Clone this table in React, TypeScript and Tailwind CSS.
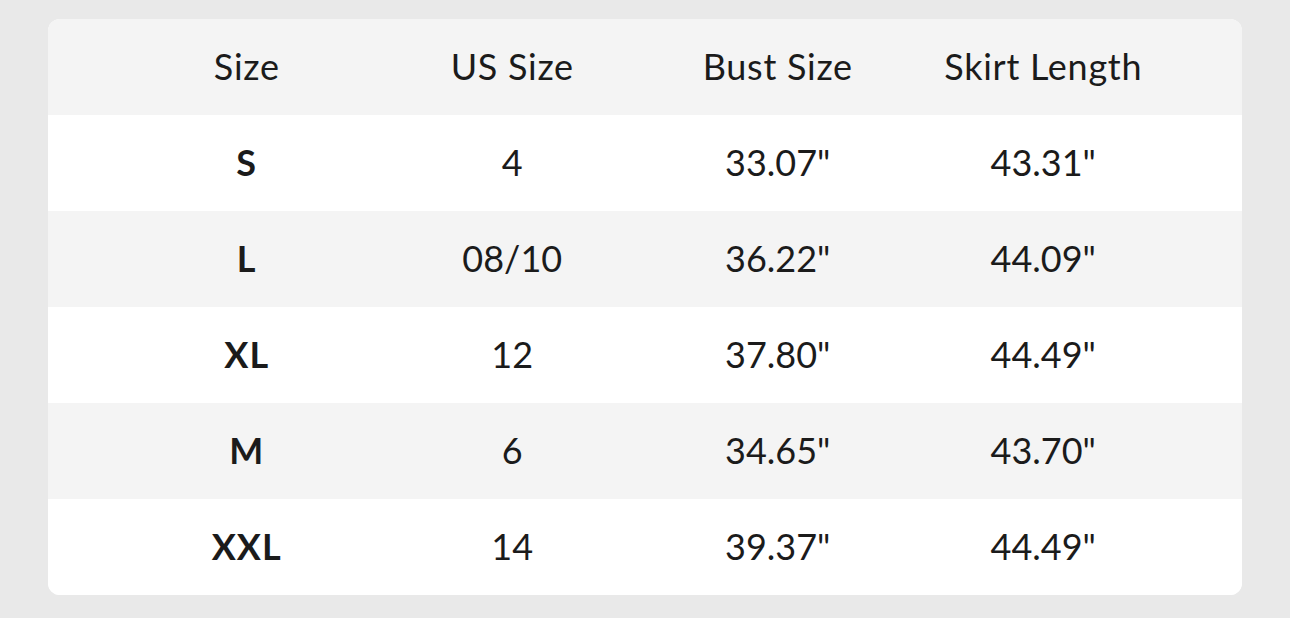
const headers = ["Size", "US Size", "Bust Size", "Skirt Length"];

const rows = [
  { size: "S", us: "4", bust: '33.07"', skirt: '43.31"' },
  { size: "L", us: "08/10", bust: '36.22"', skirt: '44.09"' },
  { size: "XL", us: "12", bust: '37.80"', skirt: '44.49"' },
  { size: "M", us: "6", bust: '34.65"', skirt: '43.70"' },
  { size: "XXL", us: "14", bust: '39.37"', skirt: '44.49"' },
];

export default function App() {
  return (
    <div className="min-h-screen bg-[#e9e9e9] pt-[19px] pl-[48px] font-['Lato',sans-serif] text-[#1b1b1b]">
      <div className="w-[1194px] overflow-hidden rounded-[12px] bg-white">
        <div className="grid h-[96px] grid-cols-4 items-center bg-[#f4f4f4] px-[66px] pb-[3px] text-[36px] tracking-[0.02em]">
          {headers.map((h) => (
            <div key={h} className="text-center">
              {h}
            </div>
          ))}
        </div>
        {rows.map((r, i) => (
          <div
            key={r.size}
            className={
              i % 2 === 1
                ? "grid h-[96px] grid-cols-4 items-center bg-[#f4f4f4] px-[66px] pb-[3px] text-[36px]"
                : "grid h-[96px] grid-cols-4 items-center bg-white px-[66px] pb-[3px] text-[36px]"
            }
          >
            <div className="text-center font-bold tracking-[0.03em]">{r.size}</div>
            <div className="text-center">{r.us}</div>
            <div className="text-center">{r.bust}</div>
            <div className="text-center">{r.skirt}</div>
          </div>
        ))}
      </div>
    </div>
  );
}
